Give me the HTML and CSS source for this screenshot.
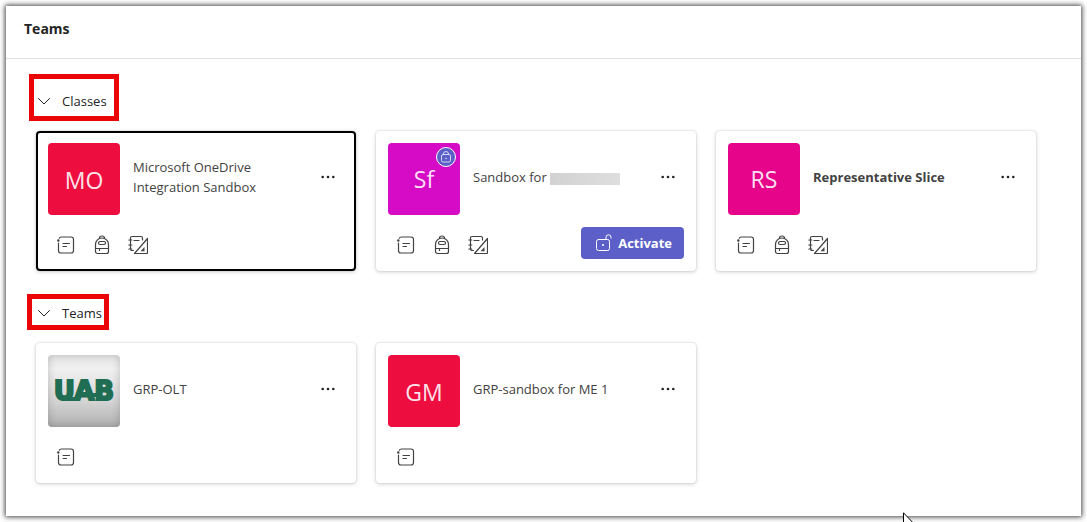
FILE: index.html
```html
<!DOCTYPE html>
<html lang="en">
<head>
<meta charset="utf-8">
<meta name="viewport" content="width=device-width, initial-scale=1">
<title>Teams</title>
<link rel="stylesheet" href="styles.css">
</head>
<body>
<svg class="sprite" aria-hidden="true">
  <symbol id="posts" viewBox="0 0 20 20">
    <path d="M2.500 8v7.500a2.500 2.500 0 0 0 2.500 2.500h10a2.500 2.500 0 0 0 2.500-2.500V4.500A2.500 2.500 0 0 0 15 2H5.500C4.300 2 3.700 2.300 3.300 3.200M7 8.500h6.500M7 11.500h3.500"/>
    <circle class="solid" cx="2.300" cy="5.500" r="1.200"/>
  </symbol>
  <symbol id="backpack" viewBox="0 0 20 20">
    <path d="M3.500 9.500a6.500 6.500 0 0 1 13 0v7a2 2 0 0 1-2 2h-9a2 2 0 0 1-2-2zM7.500 3.500V3a2.500 2 0 0 1 5 0v.5M3.500 13.500h13M7.500 13.500v2"/>
    <rect x="6.500" y="6.500" width="7" height="3" rx="1.500"/>
  </symbol>
  <symbol id="notebook" viewBox="0 0 20 20">
    <path d="M14.500 5V3a1.500 1.500 0 0 0-1.500-1.500H4A1.500 1.500 0 0 0 2.500 3v11A1.500 1.500 0 0 0 4 15.500h1.500M.8 5h3M.8 10h3M.8 14h3M6 5.500h5M19.500 3.500v14a1 1 0 0 1-1 1H6.500z"/>
    <path class="solid" d="M16.500 12v4.300h-4z"/>
  </symbol>
  <symbol id="more" viewBox="0 0 20 20">
    <circle class="solid" cx="4.700" cy="10" r="1.300"/><circle class="solid" cx="10" cy="10" r="1.300"/><circle class="solid" cx="15.300" cy="10" r="1.300"/>
  </symbol>
  <symbol id="chevron" viewBox="0 0 16 16">
    <path d="M2.500 5.500 8 11l5.500-5.500"/>
  </symbol>
  <symbol id="lock" viewBox="0 0 16 16">
    <rect x="3.500" y="5.500" width="9" height="7.500" rx="1.500"/><path d="M5.500 5.500V5a2.500 2.500 0 0 1 5 0v.5"/><circle class="solid" cx="8" cy="9.500" r=".8"/>
  </symbol>
  <symbol id="unlock" viewBox="0 0 18 20">
    <rect x="1.500" y="6.500" width="13" height="11" rx="2"/><path d="M11 6.500V4.300a2.500 2.500 0 0 1 5 0v.9"/><circle class="solid" cx="8" cy="12" r="1.100"/>
  </symbol>
</svg>

<div class="window">
  <header class="header"><h1 class="title">Teams</h1></header>
  <main class="content">
    <section class="group">
      <h2 class="group-heading">
        <button class="toggle toggle-classes" aria-expanded="true"><svg class="icon chevron"><use href="#chevron"/></svg>Classes</button>
      </h2>
      <div class="cards">
        <article class="card card-focused">
          <div class="card-top">
            <div class="avatar avatar-red">MO</div>
            <h3 class="name">Microsoft OneDrive Integration Sandbox</h3>
            <button class="more" aria-label="More options"><svg class="icon"><use href="#more"/></svg></button>
          </div>
          <div class="card-actions">
            <button class="tool" aria-label="Posts"><svg class="icon"><use href="#posts"/></svg></button>
            <button class="tool" aria-label="Assignments"><svg class="icon"><use href="#backpack"/></svg></button>
            <button class="tool" aria-label="Class notebook"><svg class="icon"><use href="#notebook"/></svg></button>
          </div>
        </article>
        <article class="card">
          <div class="card-top">
            <div class="avatar avatar-purple">Sf<span class="badge"><svg class="icon badge-icon"><use href="#lock"/></svg></span></div>
            <h3 class="name">Sandbox for <span class="redacted"></span></h3>
            <button class="more" aria-label="More options"><svg class="icon"><use href="#more"/></svg></button>
          </div>
          <div class="card-actions">
            <button class="tool" aria-label="Posts"><svg class="icon"><use href="#posts"/></svg></button>
            <button class="tool" aria-label="Assignments"><svg class="icon"><use href="#backpack"/></svg></button>
            <button class="tool" aria-label="Class notebook"><svg class="icon"><use href="#notebook"/></svg></button>
            <button class="activate"><svg class="icon activate-icon"><use href="#unlock"/></svg>Activate</button>
          </div>
        </article>
        <article class="card">
          <div class="card-top">
            <div class="avatar avatar-pink">RS</div>
            <h3 class="name name-unread">Representative Slice</h3>
            <button class="more" aria-label="More options"><svg class="icon"><use href="#more"/></svg></button>
          </div>
          <div class="card-actions">
            <button class="tool" aria-label="Posts"><svg class="icon"><use href="#posts"/></svg></button>
            <button class="tool" aria-label="Assignments"><svg class="icon"><use href="#backpack"/></svg></button>
            <button class="tool" aria-label="Class notebook"><svg class="icon"><use href="#notebook"/></svg></button>
          </div>
        </article>
      </div>
    </section>

    <section class="group">
      <h2 class="group-heading">
        <button class="toggle toggle-teams" aria-expanded="true"><svg class="icon chevron"><use href="#chevron"/></svg>Teams</button>
      </h2>
      <div class="cards">
        <article class="card">
          <div class="card-top">
            <div class="avatar avatar-silver">
              <svg class="logo" viewBox="0 0 72 72"><text class="logo-text" x="36" y="45" text-anchor="middle">UAB</text><path class="logo-bar" d="M18 44h12M42 40h8"/></svg>
            </div>
            <h3 class="name">GRP-OLT</h3>
            <button class="more" aria-label="More options"><svg class="icon"><use href="#more"/></svg></button>
          </div>
          <div class="card-actions">
            <button class="tool" aria-label="Posts"><svg class="icon"><use href="#posts"/></svg></button>
          </div>
        </article>
        <article class="card">
          <div class="card-top">
            <div class="avatar avatar-red">GM</div>
            <h3 class="name">GRP-sandbox for ME 1</h3>
            <button class="more" aria-label="More options"><svg class="icon"><use href="#more"/></svg></button>
          </div>
          <div class="card-actions">
            <button class="tool" aria-label="Posts"><svg class="icon"><use href="#posts"/></svg></button>
          </div>
        </article>
      </div>
    </section>
  </main>
</div>
<svg class="cursor" viewBox="0 0 12 18" aria-hidden="true"><path d="M.5.8v15l3.500-3.300 2.300 5 2-1-2.300-4.700h5z"/></svg>
</body>
</html>
```

FILE: styles.css
```css
* {
  box-sizing: border-box;
}

body {
  position: relative;
  display: flex;
  min-height: 100vh;
  margin: 0;
  padding: 6px;
  overflow: hidden;
  background: #fff;
  color: #424242;
  font: 13px/20px "Open Sans", "Noto Sans", sans-serif;
}

h1,
h2,
h3 {
  margin: 0;
  font: inherit;
}

button {
  padding: 0;
  border: 0;
  background: none;
  color: inherit;
  font: inherit;
  cursor: pointer;
}

.sprite {
  position: absolute;
  width: 0;
  height: 0;
}

.icon {
  flex: none;
  width: 20px;
  height: 20px;
  fill: none;
  stroke: currentColor;
  stroke-linecap: round;
  stroke-linejoin: round;
}

.solid {
  fill: currentColor;
  stroke: none;
}

.window {
  flex: 1;
  background: #fff;
  box-shadow: 0 0 5px 1px rgba(0, 0, 0, 0.75);
}

.header {
  padding: 13px 18px 19px;
  border-bottom: 1px solid #e0e0e0;
}

.title {
  color: #242424;
  font-size: 14px;
  font-weight: 700;
}

.content {
  padding: 32px 30px;
}

.group + .group {
  margin-top: 32px;
}

.group-heading {
  display: flex;
  margin-bottom: 20px;
}

.toggle {
  position: relative;
  display: flex;
  align-items: center;
  gap: 10px;
  color: #242424;
}

.toggle::after {
  content: "";
  position: absolute;
  border: 5px solid #ea0606;
}

.toggle-classes::after {
  inset: -17px -12px -10px -7px;
}

.toggle-teams::after {
  inset: -9px -7px -7px -9px;
}

.chevron {
  width: 16px;
  height: 16px;
}

.cards {
  display: grid;
  grid-template-columns: repeat(auto-fill, 320px);
  gap: 20px;
}

.card {
  display: flex;
  flex-direction: column;
  gap: 12px;
  padding: 12px 12px 8px;
  border-radius: 4px;
  background: #fff;
  box-shadow: 0 0 2px rgba(0, 0, 0, 0.14), 0 1px 4px rgba(0, 0, 0, 0.18);
}

.card-focused {
  outline: 2px solid #000;
  outline-offset: -2px;
}

.card-top {
  display: flex;
  align-items: center;
}

.avatar {
  position: relative;
  display: flex;
  flex: none;
  align-items: center;
  justify-content: center;
  width: 72px;
  height: 72px;
  padding-top: 2px;
  border-radius: 4px;
  color: rgba(255, 255, 255, 0.9);
  font-size: 23px;
}

.avatar-red {
  background: #ed0e3f;
}

.avatar-purple {
  padding: 0;
  background: #d60bc5;
}

.avatar-pink {
  padding: 0;
  background: #e6058a;
}

.avatar-silver {
  padding: 0;
  background: linear-gradient(#e6e6e6, #f0f0f0 20%, #d8d8d8 60%, #b0b0b0);
  box-shadow: inset 0 0 8px rgba(0, 0, 0, 0.2);
}

.logo {
  width: 72px;
  height: 72px;
}

.logo-text {
  fill: #1f6e53;
  stroke: #1f6e53;
  stroke-width: 2px;
  font: bold 26px "DejaVu Sans", sans-serif;
}

.logo-bar {
  fill: none;
  stroke: #1f6e53;
  stroke-width: 4px;
}

.badge {
  position: absolute;
  top: 4px;
  right: 4px;
  display: flex;
  align-items: center;
  justify-content: center;
  width: 20px;
  height: 20px;
  border: 1px solid #fff;
  border-radius: 50%;
  background: #5b5fc7;
  color: #d5d7f2;
}

.badge-icon {
  width: 16px;
  height: 16px;
}

.name {
  flex: 1;
  min-width: 0;
  padding: 0 24px 4px 13px;
}

.name-unread {
  font-weight: 700;
}

.redacted {
  display: inline-block;
  width: 70px;
  height: 12px;
  background: linear-gradient(90deg, #d2d2d2, #dedede);
  vertical-align: -3px;
}

.more {
  display: flex;
  align-items: center;
  justify-content: center;
  width: 32px;
  height: 32px;
  margin-bottom: 4px;
  color: #242424;
}

.card-actions {
  display: flex;
}

.tool {
  display: flex;
  align-items: center;
  justify-content: center;
  width: 36px;
  height: 36px;
}

.tool .icon {
  stroke-width: 1.2px;
}

.activate {
  display: flex;
  align-items: center;
  justify-content: center;
  gap: 5px;
  height: 32px;
  margin-left: auto;
  padding: 0 12px 0 14px;
  border-radius: 4px;
  background: #5b5fc7;
  color: #fff;
  font-weight: 700;
}

.activate-icon {
  width: 18px;
}

.cursor {
  position: absolute;
  top: 512px;
  left: 903px;
  width: 12px;
  height: 18px;
  fill: #fff;
  stroke: #000;
}
```
